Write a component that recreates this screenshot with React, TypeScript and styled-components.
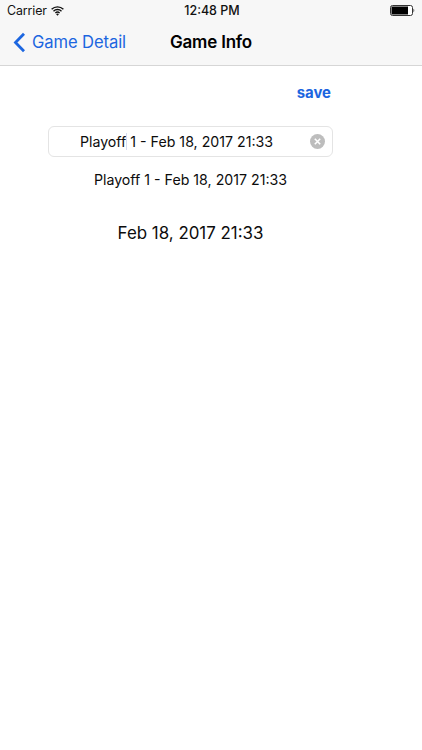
import React from "react";
import styled, { createGlobalStyle } from "styled-components";

const Global = createGlobalStyle`
  html, body { margin: 0; padding: 0; background: #fff; }
  body { font-family: Inter, "Liberation Sans", Arial, sans-serif; -webkit-font-smoothing: antialiased; }
  * { box-sizing: border-box; }
`;
const Screen = styled.div`
  width: 422px; height: 750px; background: #fff; overflow: hidden; display: flex; flex-direction: column;
`;
const Header = styled.header`
  height: 66px; background: #f7f7f7; border-bottom: 1px solid #d6d6d6; display: flex; flex-direction: column;
`;
const StatusBar = styled.div`
  height: 21px; padding: 0 6px 0 7px; display: grid; grid-template-columns: 1fr auto 1fr; align-items: center; font-size: 12.4px; color: #111;
`;
const StatusLeft = styled.div`
  display: flex; align-items: center; gap: 4px; letter-spacing: -0.1px;
`;
const Time = styled.div`
  font-weight: 500; font-size: 12.5px; padding-left: 1px;
`;
const StatusRight = styled.div`
  display: flex; justify-content: flex-end; padding-right: 1px;
`;
const NavBar = styled.nav`
  flex: 1; position: relative; display: flex; align-items: center; padding: 0 0 2px 13px;
`;
const Back = styled.div`
  display: flex; align-items: center; gap: 6px; color: #1c66e0; font-size: 16.6px; letter-spacing: -0.1px;
`;
const Title = styled.div`
  position: absolute; left: 170px; top: 11px; font-size: 17px; font-weight: 600; color: #000; letter-spacing: -0.2px;
`;
const Content = styled.main`
  flex: 1; display: flex; flex-direction: column; align-items: center; padding: 18px 41px 0 0;
`;
const SaveRow = styled.div`
  width: 100%; display: flex; justify-content: flex-end; padding-right: 50px;
`;
const SaveLabel = styled.button`
  all: unset; color: #1c66e0; font-size: 14.9px; font-weight: 700; line-height: 18px;
`;
const Field = styled.div`
  width: 285px; height: 31px; margin-top: 24px; position: relative; border: 1px solid #e4e4e4; border-radius: 6px;
  display: flex; align-items: center; justify-content: center; padding-right: 28px; font-size: 14.2px; color: #0c0c0c; white-space: pre;
`;
const Caret = styled.span`
  display: inline-block; width: 1px; height: 17px; margin-right: -1px; background: #d5dcf2;
`;
const Clear = styled.svg`
  position: absolute; right: 7px; top: 7px;
`;
const Line = styled.div`
  margin-top: 14px; font-size: 14.2px; line-height: 18px; color: #0c0c0c;
`;
const DateLine = styled.div`
  margin-top: 34px; font-size: 16.9px; line-height: 20px; color: #0c0c0c;
`;

export default function App() {
  return (
    <Screen>
      <Global />
      <Header>
        <StatusBar>
          <StatusLeft>
            Carrier
            <svg width="13" height="10" viewBox="0 0 13 10" aria-hidden="true">
              <path d="M0.6 3.3a8.4 8.4 0 0 1 11.8 0M2.5 5.2a5.7 5.7 0 0 1 8 0M4.4 7a3 3 0 0 1 4.2 0" fill="none" stroke="#111" strokeWidth="1.4" />
              <path d="M6.5 9.8L5.1 8.3a2 2 0 0 1 2.8 0z" fill="#111" />
            </svg>
          </StatusLeft>
          <Time>12:48 PM</Time>
          <StatusRight>
            <svg width="25" height="11" viewBox="0 0 25 11" aria-hidden="true">
              <rect x="0.5" y="0.5" width="22" height="10" rx="2" fill="#fff" stroke="#333" />
              <rect x="1.5" y="1.5" width="16.5" height="8" fill="#000" />
              <path d="M23.5 3.8c1 .2 1 3.2 0 3.4z" fill="#333" />
            </svg>
          </StatusRight>
        </StatusBar>
        <NavBar>
          <Back>
            <svg width="13" height="21" viewBox="0 0 13 21" aria-hidden="true">
              <path d="M11 1.8L2.5 10.5L11 19.2" fill="none" stroke="#1c66e0" strokeWidth="2.8" />
            </svg>
            Game Detail
          </Back>
          <Title>Game Info</Title>
        </NavBar>
      </Header>
      <Content>
        <SaveRow><SaveLabel>save</SaveLabel></SaveRow>
        <Field>
          {"Playoff"}<Caret />{" 1 - Feb 18, 2017 21:33"}
          <Clear width="15" height="15" viewBox="0 0 15 15" aria-hidden="true">
            <circle cx="7.5" cy="7.5" r="7.5" fill="#bdbdbd" />
            <path d="M4.8 4.8l5.4 5.4M10.2 4.8l-5.4 5.4" stroke="#fff" strokeWidth="1.6" />
          </Clear>
        </Field>
        <Line>Playoff 1 - Feb 18, 2017 21:33</Line>
        <DateLine>Feb 18, 2017 21:33</DateLine>
      </Content>
    </Screen>
  );
}
